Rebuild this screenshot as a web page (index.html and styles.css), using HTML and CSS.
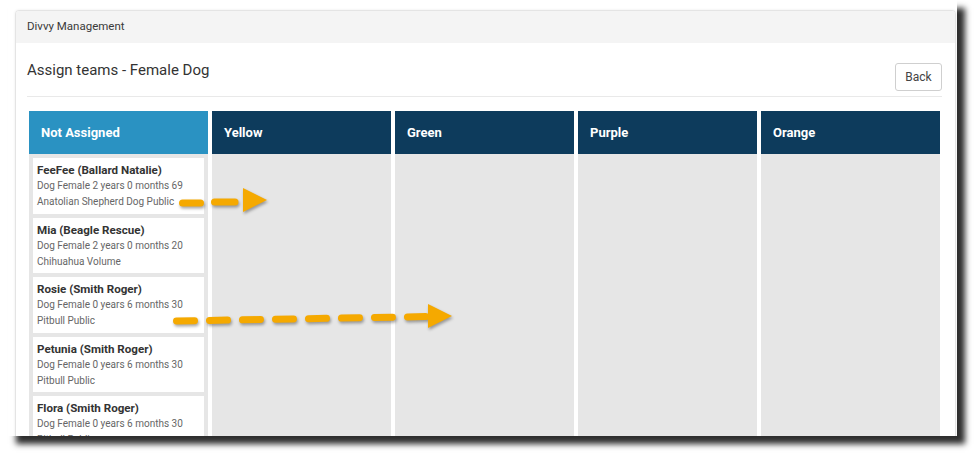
FILE: index.html
```html
<!DOCTYPE html>
<html lang="en">
<head>
<meta charset="utf-8">
<title>Divvy Management</title>
<link rel="stylesheet" href="styles.css">
</head>
<body>
<div class="frame">
  <div class="card">
    <div class="card-head">Divvy Management</div>
    <div class="card-body">
      <div class="title-row">
        <h2 class="title">Assign teams - Female Dog</h2>
        <button class="btn">Back</button>
      </div>
      <div class="board">
        <div class="col">
          <div class="col-head col-head-active">Not Assigned</div>
          <div class="col-body">
            <div class="pet">
              <div class="pet-name">FeeFee (Ballard Natalie)</div>
              <div class="pet-line">Dog Female 2 years 0 months 69</div>
              <div class="pet-line">Anatolian Shepherd Dog Public</div>
            </div>
            <div class="pet">
              <div class="pet-name">Mia (Beagle Rescue)</div>
              <div class="pet-line">Dog Female 2 years 0 months 20</div>
              <div class="pet-line">Chihuahua Volume</div>
            </div>
            <div class="pet">
              <div class="pet-name">Rosie (Smith Roger)</div>
              <div class="pet-line">Dog Female 0 years 6 months 30</div>
              <div class="pet-line">Pitbull Public</div>
            </div>
            <div class="pet">
              <div class="pet-name">Petunia (Smith Roger)</div>
              <div class="pet-line">Dog Female 0 years 6 months 30</div>
              <div class="pet-line">Pitbull Public</div>
            </div>
            <div class="pet">
              <div class="pet-name">Flora (Smith Roger)</div>
              <div class="pet-line">Dog Female 0 years 6 months 30</div>
              <div class="pet-line">Pitbull Public</div>
            </div>
          </div>
        </div>
        <div class="col">
          <div class="col-head">Yellow</div>
          <div class="col-body"></div>
        </div>
        <div class="col">
          <div class="col-head">Green</div>
          <div class="col-body"></div>
        </div>
        <div class="col">
          <div class="col-head">Purple</div>
          <div class="col-body"></div>
        </div>
        <div class="col">
          <div class="col-head">Orange</div>
          <div class="col-body"></div>
        </div>
      </div>
    </div>
  </div>
</div>
<svg class="arrows" width="976" height="454" viewBox="0 0 976 454" xmlns="http://www.w3.org/2000/svg">
  <g fill="#f5a900" stroke="#f5a900" stroke-width="7" stroke-linecap="round">
    <line x1="182.5" y1="203" x2="200.5" y2="203"/>
    <line x1="214.5" y1="202" x2="235" y2="202"/>
    <polygon points="243,188 243,212 267,200" stroke="none"/>
    <line x1="176.5" y1="321" x2="426" y2="316.6" stroke-dasharray="18 15"/>
    <polygon points="428,304 428,328 452,316" stroke="none"/>
  </g>
</svg>
</body>
</html>
```

FILE: styles.css
```css
html, body {
  margin: 0;
  padding: 0;
  background: #ffffff;
}

body {
  font-family: Roboto, "Liberation Sans", Arial, sans-serif;
  color: #333333;
  position: relative;
  width: 976px;
  height: 454px;
  overflow: hidden;
}

.frame {
  margin-left: 8px;
  width: 949px;
  height: 436px;
  background: #ffffff;
  overflow: hidden;
  box-shadow: 8px 8px 6px #2e2e2e;
  padding-top: 10px;
  box-sizing: border-box;
}

.card {
  margin-left: 7px;
  width: 941px;
  box-sizing: border-box;
  border: 1px solid #e4e4e4;
  border-radius: 4px;
  background: #ffffff;
  box-shadow: 0 0 3px rgba(0, 0, 0, 0.08);
}

.card-head {
  background: #f4f4f4;
  font-size: 11.5px;
  line-height: 14px;
  padding: 8px 11px 10px;
  color: #3a3a3a;
  border-radius: 3px 3px 0 0;
}

.card-body {
  padding: 12px 13px 0 11px;
}

.title-row {
  display: flex;
  justify-content: space-between;
  align-items: flex-start;
  padding: 8px 0 5px;
  border-bottom: 1px solid #e9e9e9;
}

.title {
  margin: -2px 0 0;
  font-size: 15px;
  line-height: 19px;
  font-weight: 400;
  color: #333333;
}

.btn {
  font-family: inherit;
  font-size: 12px;
  color: #444444;
  background: #ffffff;
  border: 1px solid #cfcfcf;
  border-radius: 3px;
  width: 47px;
  height: 28px;
  padding: 0;
}

.board {
  margin: 14px 2px 0;
  display: grid;
  grid-template-columns: repeat(5, 1fr);
  gap: 4px;
}

.col {
  display: flex;
  flex-direction: column;
}

.col-head {
  height: 43px;
  background: #0d3b5c;
  color: #ffffff;
  font-size: 13px;
  font-weight: 700;
  padding-left: 12px;
  display: flex;
  align-items: center;
}

.col-head-active {
  background: #2a92c2;
}

.col-body {
  background: #e6e6e6;
  padding: 4px;
  min-height: 330px;
  display: flex;
  flex-direction: column;
  gap: 4px;
}

.pet {
  background: #ffffff;
  padding: 4px 4px 3.5px;
}

.pet-name {
  font-size: 11.6px;
  line-height: 16px;
  font-weight: 700;
  color: #333333;
}

.pet-line {
  font-size: 10px;
  line-height: 16px;
  color: #666666;
}

.arrows {
  position: absolute;
  left: 0;
  top: 0;
  pointer-events: none;
  filter: drop-shadow(1px 2px 1.5px rgba(0, 0, 0, 0.35));
}
```
